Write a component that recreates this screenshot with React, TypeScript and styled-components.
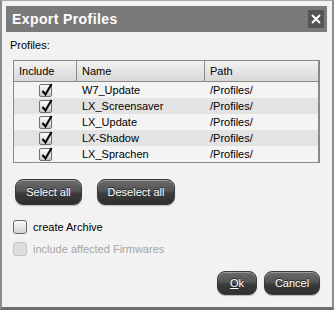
import React from 'react'
import styled, { createGlobalStyle } from 'styled-components'

const GlobalStyle = createGlobalStyle`
  html, body {
    margin: 0;
    padding: 0;
    background: #f2f2f2;
  }
  * {
    box-sizing: border-box;
  }
`

const Window = styled.div`
  width: 334px;
  height: 310px;
  background: #f2f2f2;
  border-left: 2px solid #8c8c8c;
  border-right: 2px solid #8c8c8c;
  border-top: 1px solid #a8a8a8;
  border-bottom: 3px solid #6e6e6e;
  padding: 5px 5px 0 4px;
  font-family: 'Liberation Sans', Arial, sans-serif;
  font-size: 11px;
  color: #000;
  display: flex;
  flex-direction: column;
`

const TitleBar = styled.div`
  height: 26px;
  background: #7a7a7a;
  display: flex;
  align-items: center;
  justify-content: space-between;
  padding: 0 3px 0 6px;
`

const Title = styled.div`
  color: #fff;
  font-size: 14px;
  font-weight: bold;
  letter-spacing: 0.4px;
`

const CloseButton = styled.div`
  width: 16px;
  height: 18px;
  background: #545454;
  display: flex;
  align-items: center;
  justify-content: center;
`

const Content = styled.div`
  flex: 1;
  padding: 6px 7px 0 7px;
  display: flex;
  flex-direction: column;
`

const Label = styled.div`
  line-height: 14px;
  margin-left: -3px;
`

const Table = styled.div`
  margin-top: 8px;
  border: 1px solid #8a8a8a;
  border-right: 2px solid #8a8a8a;
  background: #f4f4f4;
`

const Row = styled.div<{ $shaded?: boolean }>`
  display: grid;
  grid-template-columns: 63px 128px 1fr;
  height: 16px;
  align-items: center;
  background: ${(p) => (p.$shaded ? '#e3e3e3' : '#f4f4f4')};
`

const HeaderRow = styled(Row)`
  height: 21px;
  background: linear-gradient(#f2f2f2, #d8d8d8);
  border-bottom: 1px solid #8a8a8a;
`

const HeaderCell = styled.div<{ $last?: boolean }>`
  height: 100%;
  display: flex;
  align-items: center;
  padding-left: 5px;
  border-right: ${(p) => (p.$last ? 'none' : '1px solid #8a8a8a')};
`

const Cell = styled.div`
  padding-left: 5px;
  line-height: 16px;
  white-space: nowrap;
`

const CheckCell = styled.div`
  display: flex;
  justify-content: center;
`

const TableCheck = styled.div`
  width: 13px;
  height: 13px;
  border: 1px solid #6f6f6f;
  border-radius: 2px;
  background: linear-gradient(#fdfdfd, #c8c8c8);
  position: relative;
`

const CheckMark = styled.svg`
  position: absolute;
  left: 1px;
  top: -2px;
`

const ButtonRow = styled.div`
  display: flex;
  gap: 15px;
  margin-top: 16px;
  margin-left: 2px;
`

const DarkButton = styled.div<{ $width: number }>`
  width: ${(p) => p.$width}px;
  height: 26px;
  border-radius: 8px;
  border: 1px solid #3a3a3a;
  background: linear-gradient(#6a6a6a 0%, #555 45%, #3c3c3c 55%, #2e2e2e 100%);
  box-shadow: inset 0 1px 0 rgba(255, 255, 255, 0.35), 0 1px 1px rgba(0, 0, 0, 0.25);
  color: #fff;
  font-size: 11px;
  display: flex;
  align-items: center;
  justify-content: center;
  text-shadow: 0 -1px 0 #222;
`

const Options = styled.div`
  margin-top: 15px;
  display: flex;
  flex-direction: column;
  gap: 8px;
`

const Option = styled.div<{ $disabled?: boolean }>`
  display: flex;
  align-items: center;
  gap: 6px;
  color: ${(p) => (p.$disabled ? '#a6a6a6' : '#000')};
  font-size: 11px;
`

const Box = styled.div<{ $disabled?: boolean }>`
  width: 14px;
  height: 14px;
  border-radius: 3px;
  border: 1px solid ${(p) => (p.$disabled ? '#c4c4c4' : '#6a6a6a')};
  background: ${(p) =>
    p.$disabled ? '#dedede' : 'linear-gradient(#fafafa, #d4d4d4)'};
`

const Footer = styled.div`
  margin-top: auto;
  margin-bottom: 12px;
  display: flex;
  justify-content: flex-end;
  gap: 7px;
`

const FooterButton = styled(DarkButton)`
  height: 24px;
`

const profiles = ['W7_Update', 'LX_Screensaver', 'LX_Update', 'LX-Shadow', 'LX_Sprachen']

const App: React.FC = () => {
  return (
    <>
      <GlobalStyle />
      <Window>
        <TitleBar>
          <Title>Export Profiles</Title>
          <CloseButton>
            <svg width="10" height="10" viewBox="0 0 10 10">
              <path d="M1 1 L9 9 M9 1 L1 9" stroke="#fff" strokeWidth="2" />
            </svg>
          </CloseButton>
        </TitleBar>
        <Content>
          <Label>Profiles:</Label>
          <Table>
            <HeaderRow>
              <HeaderCell>Include</HeaderCell>
              <HeaderCell>Name</HeaderCell>
              <HeaderCell $last>Path</HeaderCell>
            </HeaderRow>
            {profiles.map((name, i) => (
              <Row key={name} $shaded={i % 2 === 1}>
                <CheckCell>
                  <TableCheck>
                    <CheckMark width="12" height="14" viewBox="0 0 12 14">
                      <path d="M1.5 8 L4.5 11.5 L10.5 1" stroke="#000" strokeWidth="2" fill="none" />
                    </CheckMark>
                  </TableCheck>
                </CheckCell>
                <Cell>{name}</Cell>
                <Cell>/Profiles/</Cell>
              </Row>
            ))}
          </Table>
          <ButtonRow>
            <DarkButton $width={67}>Select all</DarkButton>
            <DarkButton $width={78}>Deselect all</DarkButton>
          </ButtonRow>
          <Options>
            <Option>
              <Box />
              create Archive
            </Option>
            <Option $disabled>
              <Box $disabled />
              include affected Firmwares
            </Option>
          </Options>
          <Footer>
            <FooterButton $width={40}>
              <u>O</u>k
            </FooterButton>
            <FooterButton $width={56}>Cancel</FooterButton>
          </Footer>
        </Content>
      </Window>
    </>
  )
}

export default App
